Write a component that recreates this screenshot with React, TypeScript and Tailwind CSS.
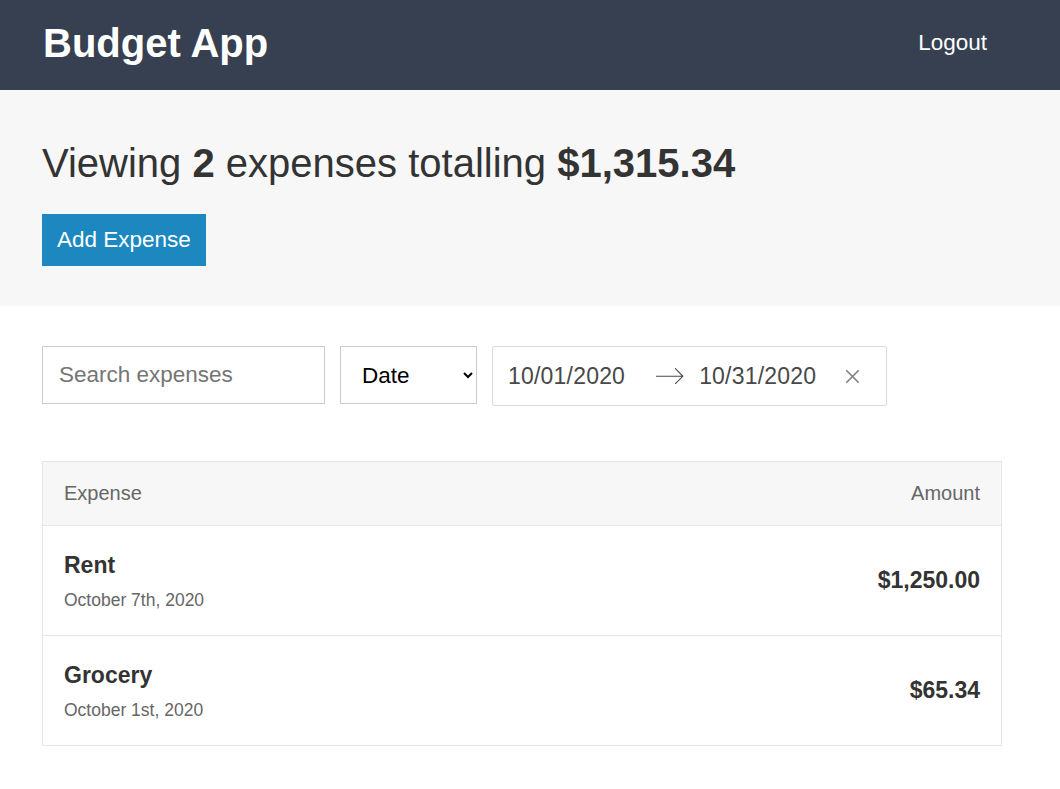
const expenses = [
  { id: "rent", description: "Rent", date: "October 7th, 2020", amount: "$1,250.00" },
  { id: "grocery", description: "Grocery", date: "October 1st, 2020", amount: "$65.34" },
];

export default function App() {
  return (
    <div className="min-h-screen bg-white font-[family-name:Liberation_Sans,Arial,sans-serif] text-[#333333]">
      <header className="bg-[#364051]">
        <div className="mx-auto flex h-[90px] w-[976px] items-center justify-between pb-[4px] pl-[1px] pr-[31px]">
          <h1 className="text-[40px] font-bold leading-none text-white">Budget App</h1>
          <button className="text-[22.5px] text-white">Logout</button>
        </div>
      </header>

      <section className="bg-[#f7f7f7] pb-[40px] pt-[50px]">
        <div className="mx-auto w-[976px]">
          <h2 className="mb-[28px] text-[40px] font-light leading-[1.15]">
            Viewing <span className="font-bold">2</span> expenses totalling{" "}
            <span className="font-bold">$1,315.34</span>
          </h2>
          <button className="h-[52px] bg-[#1c88bf] px-[15px] text-[22.5px] text-white">
            Add Expense
          </button>
        </div>
      </section>

      <div className="mx-auto w-[976px] pt-[40px]">
        <div className="flex items-start gap-[15px]">
          <input
            placeholder="Search expenses"
            className="h-[58px] w-[283px] border border-[#cacccd] px-[16px] text-[22.5px] text-[#333] outline-none placeholder:text-[#757575]"
          />
          <select className="h-[58px] w-[137px] border border-[#cacccd] bg-white px-[17px] text-[22.5px] text-black outline-none">
            <option>Date</option>
            <option>Amount</option>
          </select>
          <div className="flex h-[60px] w-[395px] items-center rounded-[2px] border border-[#dbdbdb] bg-white pl-[15px] text-[23px] text-[#484848]">
            <span className="tracking-[0.2px]">10/01/2020</span>
            <svg viewBox="0 0 1000 1000" className="ml-[30px] h-[30px] w-[30px] fill-[#484848]">
              <path d="M694 242l249 250c8 7 8 19 0 26L694 768c-7 7-18 7-25 0-7-7-7-19 0-26l218-218H46c-10 0-18-8-18-18s8-18 18-18h841L669 268c-7-7-7-19 0-26 7-7 18-7 25 0z" />
            </svg>
            <span className="ml-[14px] tracking-[0.2px]">10/31/2020</span>
            <svg viewBox="0 0 12 12" className="ml-[29px] h-[15px] w-[15px] stroke-[#818181]" fill="none" strokeWidth="1.3">
              <path d="M1 1l10 10M11 1L1 11" />
            </svg>
          </div>
        </div>

        <div className="mt-[55px] w-[960px] border border-[#e5e5e5]">
          <div className="flex h-[64px] items-center justify-between border-b border-[#e5e5e5] bg-[#f7f7f7] px-[21px] pb-[1px] text-[20px] text-[#666666]">
            <span>Expense</span>
            <span>Amount</span>
          </div>
          {expenses.map((expense, index) => (
            <div
              key={expense.id}
              className={
                index < expenses.length - 1
                  ? "flex h-[110px] items-center justify-between border-b border-[#e5e5e5] px-[21px]"
                  : "flex h-[109px] items-center justify-between px-[21px]"
              }
            >
              <div>
                <h3 className="mb-[12px] text-[23px] font-bold leading-[26px]">{expense.description}</h3>
                <span className="block text-[17.5px] leading-[20px] text-[#666666]">{expense.date}</span>
              </div>
              <h3 className="text-[23px] font-bold">{expense.amount}</h3>
            </div>
          ))}
        </div>
      </div>
    </div>
  );
}
